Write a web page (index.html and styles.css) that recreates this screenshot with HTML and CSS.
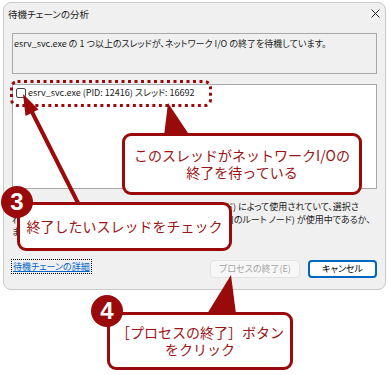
FILE: index.html
```html
<!DOCTYPE html>
<html lang="ja">
<head>
  <meta charset="UTF-8" />
  <meta name="viewport" content="width=device-width, initial-scale=1.0" />
  <title>待機チェーンの分析</title>
  <link rel="stylesheet" href="styles.css">
</head>
<body>
  <div class="page">
    <div class="dialog">
      <div class="titlebar">
        <span class="title">待機チェーンの分析</span>
        <svg class="close" width="9" height="9" viewBox="0 0 9 9">
          <path d="M0.5 0.5 L8.5 8.5 M8.5 0.5 L0.5 8.5" stroke="#222" stroke-width="1" fill="none" />
        </svg>
      </div>

      <div class="message">esrv_svc.exe の 1 つ以上のスレッドが、ネットワーク I/O の終了を待機しています。</div>

      <div class="tree">
        <label class="thread">
          <span class="check"></span>
          esrv_svc.exe (PID: 12416) スレッド: 16692
        </label>
      </div>

      <p class="note">
        プロセスは、他のプロセス (待機チェーン ツリーの子ノード) によって使用されていて、選択さ<br>
        れたプロセスを強制的に終了できます。プロセス (ツリー内のルート ノード) が使用中であるか、<br>
        または応答しない場合にのみ終了してください。
      </p>

      <div class="footer">
        <a href="#" class="details">待機チェーンの詳細</a>
        <div class="buttons">
          <button type="button" class="end-btn" disabled>プロセスの終了(E)</button>
          <button type="button" class="cancel-btn">キャンセル</button>
        </div>
      </div>
    </div>

    <!-- annotations over the screenshot -->
    <svg class="marks" width="389" height="375" viewBox="0 0 389 375">
      <rect x="11.5" y="81.5" width="199" height="24" rx="6" fill="none" stroke="#9a0a0a" stroke-width="3" stroke-dasharray="3 3.5" />
      <polygon points="168,103 164,136 190,136" fill="#9a0a0a" />
      <polygon points="231,275 207,314 236,314" fill="#9a0a0a" />
      <line x1="78" y1="203" x2="31" y2="110" stroke="#9a0a0a" stroke-width="4" />
      <polygon points="23,94 25.5,116 38.5,109.5" fill="#9a0a0a" />
    </svg>

    <div class="callout callout-wait">このスレッドがネットワークI/Oの<br>終了を待っている</div>
    <div class="callout callout-check">終了したいスレッドをチェック</div>
    <div class="callout callout-end">［プロセスの終了］ボタン<br>をクリック</div>
    <div class="step step-3">3</div>
    <div class="step step-4">4</div>
  </div>
</body>
</html>
```

FILE: styles.css
```css
body {
  margin: 0;
  font-family: "Noto Sans CJK JP", "Noto Sans", sans-serif;
  font-size: 9px;
  color: #1a1a1a;
  background: #fff;
}

.page {
  position: relative;
  width: 389px;
  height: 375px;
  overflow: hidden;
}

.dialog {
  display: flex;
  flex-direction: column;
  width: 383px;
  margin: 2px 3px 0;
  padding: 0 8px 11px;
  box-sizing: border-box;
  border: 1px solid #c9c9c9;
  border-radius: 8px;
  background: #f0f0f0;
  font-feature-settings: "palt";
}

.titlebar {
  display: flex;
  justify-content: space-between;
  align-items: center;
  height: 21px;
  margin: 0 -4px;
  font-size: 9.5px;
}

.close {
  display: block;
  margin-right: 1px;
}

.message {
  margin-top: 9px;
  height: 41px;
  box-sizing: border-box;
  padding: 3px 1px;
  border: 1px solid #a8a8a8;
  line-height: 13px;
}

.tree {
  margin-top: 10px;
  height: 105px;
  box-sizing: border-box;
  padding: 3px;
  background: #fff;
  border: 1px solid #a8a8a8;
}

.thread {
  display: flex;
  align-items: center;
  gap: 2px;
  line-height: 10px;
}

.check {
  width: 10px;
  height: 10px;
  box-sizing: border-box;
  border: 1px solid #444;
  border-radius: 2px;
  background: #fff;
}

.note {
  margin: 12px 0 0;
  line-height: 12.5px;
  white-space: nowrap;
  overflow: hidden;
}

.footer {
  display: flex;
  justify-content: space-between;
  align-items: flex-start;
  margin-top: 21px;
}

.details {
  margin: 1px 0 0 1px;
  line-height: 11px;
  color: #0066cc;
  text-decoration: underline;
  outline: 1px dotted #000;
  outline-offset: 1px;
}

.buttons {
  display: flex;
  gap: 8px;
}

.buttons button {
  height: 18px;
  padding: 0;
  font: inherit;
  border-radius: 4px;
}

.end-btn {
  width: 90px;
  background: #f7f7f7;
  border: 1px solid #e3e3e3;
  color: #a3a3a3;
}

.cancel-btn {
  width: 69px;
  background: #fff;
  border: 2px solid #0067c0;
  color: #000;
}

/* annotations */
.marks {
  position: absolute;
  left: 0;
  top: 0;
}

.callout {
  position: absolute;
  display: flex;
  align-items: center;
  justify-content: center;
  box-sizing: border-box;
  border: 3px solid #9a0a0a;
  border-radius: 9px;
  background: #fff;
  color: #9c1414;
  font-size: 14px;
  line-height: 17px;
  text-align: center;
}

.callout-wait {
  left: 122px;
  top: 133px;
  width: 240px;
  height: 62px;
}

.callout-check {
  left: 17px;
  top: 202px;
  width: 215px;
  height: 49px;
}

.callout-end {
  left: 107px;
  top: 312px;
  width: 186px;
  height: 58px;
}

.step {
  position: absolute;
  display: flex;
  align-items: center;
  justify-content: center;
  width: 32px;
  height: 32px;
  border-radius: 50%;
  background: #9a0a0a;
  color: #fff;
  font-family: "Liberation Sans", Arial, sans-serif;
  font-weight: bold;
  font-size: 24px;
}

.step-3 {
  left: 1px;
  top: 186px;
}

.step-4 {
  left: 91px;
  top: 295px;
}
```
